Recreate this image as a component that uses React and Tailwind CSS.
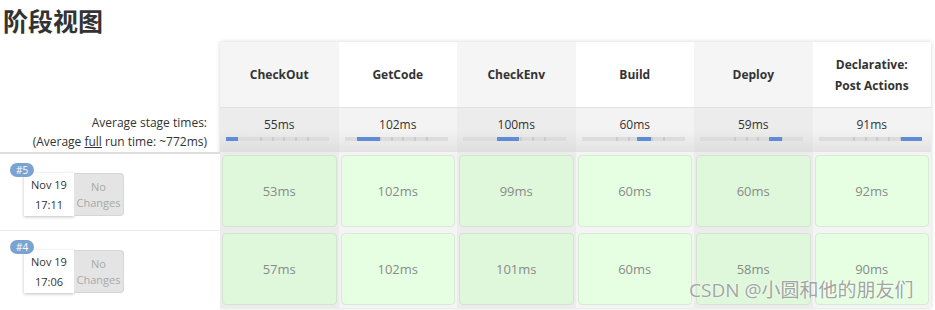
import React from "react";

const stages = [
  { name: "CheckOut", avg: "55ms", left: 0, width: 12, runs: ["53ms", "57ms"] },
  { name: "GetCode", avg: "102ms", left: 12, width: 23, runs: ["102ms", "102ms"] },
  { name: "CheckEnv", avg: "100ms", left: 34, width: 22, runs: ["99ms", "101ms"] },
  { name: "Build", avg: "60ms", left: 55, width: 14, runs: ["60ms", "60ms"] },
  { name: "Deploy", avg: "59ms", left: 69, width: 13, runs: ["60ms", "58ms"] },
  { name: "Declarative:\nPost Actions", avg: "91ms", left: 82, width: 21, runs: ["92ms", "90ms"] },
];

const builds = [
  { id: "#5", date: "Nov 19", time: "17:11" },
  { id: "#4", date: "Nov 19", time: "17:06" },
];

const ticks = [34, 46, 57, 69, 81];

const StageColumn = ({ stage, dark }) => (
  <div className="flex flex-col">
    <div
      className={`flex h-[65px] items-center justify-center whitespace-pre-line text-center text-[12px] font-bold leading-[21px] text-[#333] ${
        dark ? "bg-[#f5f5f5]" : "bg-white"
      }`}
    >
      {stage.name}
    </div>
    <div
      className={`h-[45px] border-t border-[#e2e2e2] ${
        dark
          ? "bg-gradient-to-b from-[#ececec] via-[#ececec] to-[#dedede]"
          : "bg-gradient-to-b from-[#f3f3f3] via-[#f3f3f3] to-[#e3e3e3]"
      }`}
    >
      <div className="pt-[8px] text-center text-[12px] leading-[18px] text-[#333]">{stage.avg}</div>
      <div className="relative ml-[6px] mt-[3px] h-[4px] w-[103px] bg-[#dcdcdc]">
        {ticks.map((t) => (
          <span key={t} className="absolute top-0 h-[4px] w-[2px] bg-[#cbcbcb]" style={{ left: t }} />
        ))}
        <span
          className="absolute top-0 h-[4px] bg-[#5d8dd6]"
          style={{ left: stage.left, width: stage.width }}
        />
      </div>
    </div>
    {stage.runs.map((r, i) => (
      <div key={i} className={`h-[78px] px-[2px] py-[3px] ${dark ? "bg-[#ececec]" : "bg-[#f4f4f4]"}`}>
        <div
          className={`flex h-full items-center justify-center rounded-[4px] border pt-[2px] text-[13px] text-[#8a8a8a] ${
            dark ? "border-[#d2e6cf] bg-[#dff8dc]" : "border-[#d6ebd3] bg-[#e6ffe3]"
          }`}
        >
          {r}
        </div>
      </div>
    ))}
  </div>
);

const App = () => {
  return (
    <div className="relative h-[310px] w-[935px] overflow-hidden bg-white font-['Open_Sans','Noto_Sans_CJK_SC',sans-serif]">
      <h2 className="h-[42px] pl-[3px] pt-[1px] font-['Noto_Sans_CJK_SC',sans-serif] text-[25px] font-bold leading-[38px] text-[#333]">
        阶段视图
      </h2>

      <div className="flex">
        {/* Left labels */}
        <div className="w-[220px]">
          <div className="h-[65px]" />
          <div className="flex h-[45px] flex-col items-end justify-center pr-[13px] pt-[4px] text-[12px] leading-[19px] text-[#333]">
            <div>Average stage times:</div>
            <div>
              (Average <span className="underline">full</span> run time: ~772ms)
            </div>
          </div>
          {builds.map((b, i) => (
            <div
              key={b.id}
              className={`relative h-[78px] bg-white ${
                i === 0 ? "border-t-2 border-[#dedede]" : "border-t border-[#ececec]"
              }`}
            >
              <div className="ml-[24px] mt-[19px] flex h-[43px]">
                <div className="flex w-[50px] flex-col items-center justify-center gap-[4px] bg-white text-[11px] leading-[16px] text-[#333] shadow-[0_1px_3px_rgba(0,0,0,0.25)]">
                  <span>{b.date}</span>
                  <span>{b.time}</span>
                </div>
                <div className="flex w-[50px] flex-col items-center justify-center rounded-r-[4px] border border-l-0 border-[#d6d6d6] bg-[#e4e4e4] text-[11px] leading-[16px] text-[#a8a8a8]">
                  <span>No</span>
                  <span>Changes</span>
                </div>
              </div>
              <span className="absolute left-[10px] top-[9px] rounded-full bg-[#7ba3d2] px-[6px] text-[10px] leading-[14px] text-white">
                {b.id}
              </span>
            </div>
          ))}
        </div>

        {/* Stage table */}
        <div className="grid w-[711px] grid-cols-6 shadow-[0_0_4px_rgba(0,0,0,0.18)]">
          {stages.map((s, i) => (
            <StageColumn key={s.name} stage={s} dark={i % 2 === 0} />
          ))}
        </div>
      </div>

      <div className="absolute left-[689px] top-[278px] text-[19px] leading-[24px] text-[#8c8c8c]/80 [text-shadow:0_0_2px_#fff]">
        CSDN @小圆和他的朋友们
      </div>
    </div>
  );
};

export default App;
